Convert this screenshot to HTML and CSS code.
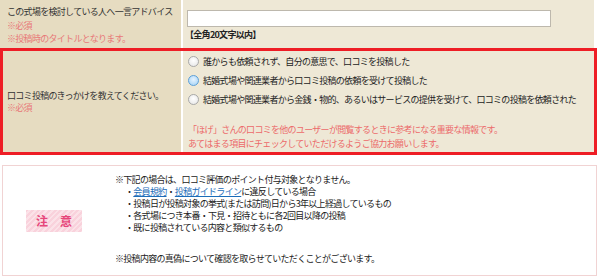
FILE: index.html
```html
<!DOCTYPE html>
<html lang="ja">
<head>
  <meta charset="UTF-8" />
  <meta name="viewport" content="width=device-width, initial-scale=1.0"/>
  <title>口コミ投稿</title>
  <link rel="stylesheet" href="styles.css">
</head>
<body>
  <div class="form">
    <div class="row row-title">
      <div class="label">
        <p>この式場を検討している人へ一言アドバイス</p>
        <p class="req">※必須</p>
        <p class="req">※投稿時のタイトルとなります。</p>
      </div>
      <div class="field">
        <input type="text" class="text-input">
        <p class="limit">【全角20文字以内】</p>
      </div>
    </div>

    <div class="must">
      <div class="row row-reason">
        <div class="label label-middle">
          <div>
            <p>口コミ投稿のきっかけを教えてください。</p>
            <p class="req">※必須</p>
          </div>
        </div>
        <div class="field">
          <label class="choice"><span class="radio"></span>誰からも依頼されず、自分の意思で、口コミを投稿した</label>
          <label class="choice"><span class="radio on"></span>結婚式場や関連業者から口コミ投稿の依頼を受けて投稿した</label>
          <label class="choice"><span class="radio"></span>結婚式場や関連業者から金銭・物的、あるいはサービスの提供を受けて、口コミの投稿を依頼された</label>
          <p class="notice">「ほげ」さんの口コミを他のユーザーが閲覧するときに参考になる重要な情報です。</p>
          <p class="notice">あてはまる項目にチェックしていただけるようご協力お願いします。</p>
        </div>
      </div>
    </div>
  </div>

  <div class="caution">
    <div class="badge">注　意</div>
    <div class="caution-text">
      <p>※下記の場合は、口コミ評価のポイント付与対象となりません。</p>
      <ul>
        <li>・<a href="#">会員規約</a>・<a href="#">投稿ガイドライン</a>に違反している場合</li>
        <li>・投稿日が投稿対象の挙式(または訪問)日から3年以上経過しているもの</li>
        <li>・各式場につき本番・下見・招待ともに各2回目以降の投稿</li>
        <li>・既に投稿されている内容と類似するもの</li>
      </ul>
      <p class="last">※投稿内容の真偽について確認を取らせていただくことがございます。</p>
    </div>
  </div>
</body>
</html>
```

FILE: styles.css
```css
body {
  margin: 0;
  font-family: "Noto Sans CJK JP", sans-serif;
  font-size: 9px;
  letter-spacing: -0.7px;
  line-height: 12px;
  color: #333;
  background: #fff;
}

p { margin: 0; }

.form {
  width: 597px;
}

.row {
  display: grid;
  grid-template-columns: 181px 1fr;
  column-gap: 2px;
}

.row-title {
  width: 594px;
  height: 48px;
}

.label {
  background: #e6dcc1;
  padding: 5px 0 0 7px;
}

.row-title .label p {
  height: 13.5px;
  line-height: 13.5px;
}

.field {
  background: #eee8d6;
  padding: 0 4px;
}

.req { color: #e87878; }

.text-input {
  display: block;
  box-sizing: border-box;
  width: 364px;
  height: 17px;
  margin: 10px 0 0 0;
  border: 1px solid #bdb8ad;
  background: #fff;
  padding: 0;
}

.limit {
  font-weight: bold;
  color: #222;
  margin: 1px 0 0 -2px;
  line-height: 13px;
}

.must {
  border: 3px solid #ee1d25;
  width: 591px;
}

.row-reason {
  grid-template-columns: 178px 1fr;
  height: 101px;
}

.label-middle {
  display: flex;
  align-items: center;
  padding: 0 0 0 4px;
}

.row-reason .field {
  padding: 1px 4px 0 5px;
}

.choice {
  display: flex;
  align-items: center;
  height: 19px;
  color: #222;
}

.radio {
  flex: none;
  width: 9px;
  height: 9px;
  margin-right: 4px;
  border-radius: 50%;
  border: 1px solid #a8a8a8;
  background: radial-gradient(circle at 50% 40%, #fff 0, #e4e4e4 100%);
}

.radio.on {
  border-color: #5d9fd6;
  background: radial-gradient(circle at 50% 40%, #e6f3ff 0, #9fd0f5 100%);
}

.notice {
  color: #ec6a6a;
  line-height: 14px;
}

.choice + .notice {
  margin-top: 14px;
}

.caution {
  display: flex;
  align-items: center;
  box-sizing: border-box;
  margin: 10px 0 0 2px;
  width: 595px;
  height: 111px;
  border: 1px solid #f1d3d3;
}

.badge {
  flex: none;
  width: 56px;
  height: 22px;
  margin: 0 33px 0 23px;
  line-height: 22px;
  text-align: center;
  font-size: 12px;
  letter-spacing: 0;
  font-weight: bold;
  color: #e6467a;
  background: repeating-linear-gradient(135deg, #f9d2dc 0 2px, #fbe2e8 2px 4px);
}

.caution-text {
  color: #222;
  align-self: flex-start;
  padding-top: 8px;
}

.caution-text ul {
  list-style: none;
  margin: 0;
  padding: 0 0 0 10px;
}

.caution-text a {
  color: #1b6cb8;
}

.caution-text .last {
  margin-top: 19px;
}
```
